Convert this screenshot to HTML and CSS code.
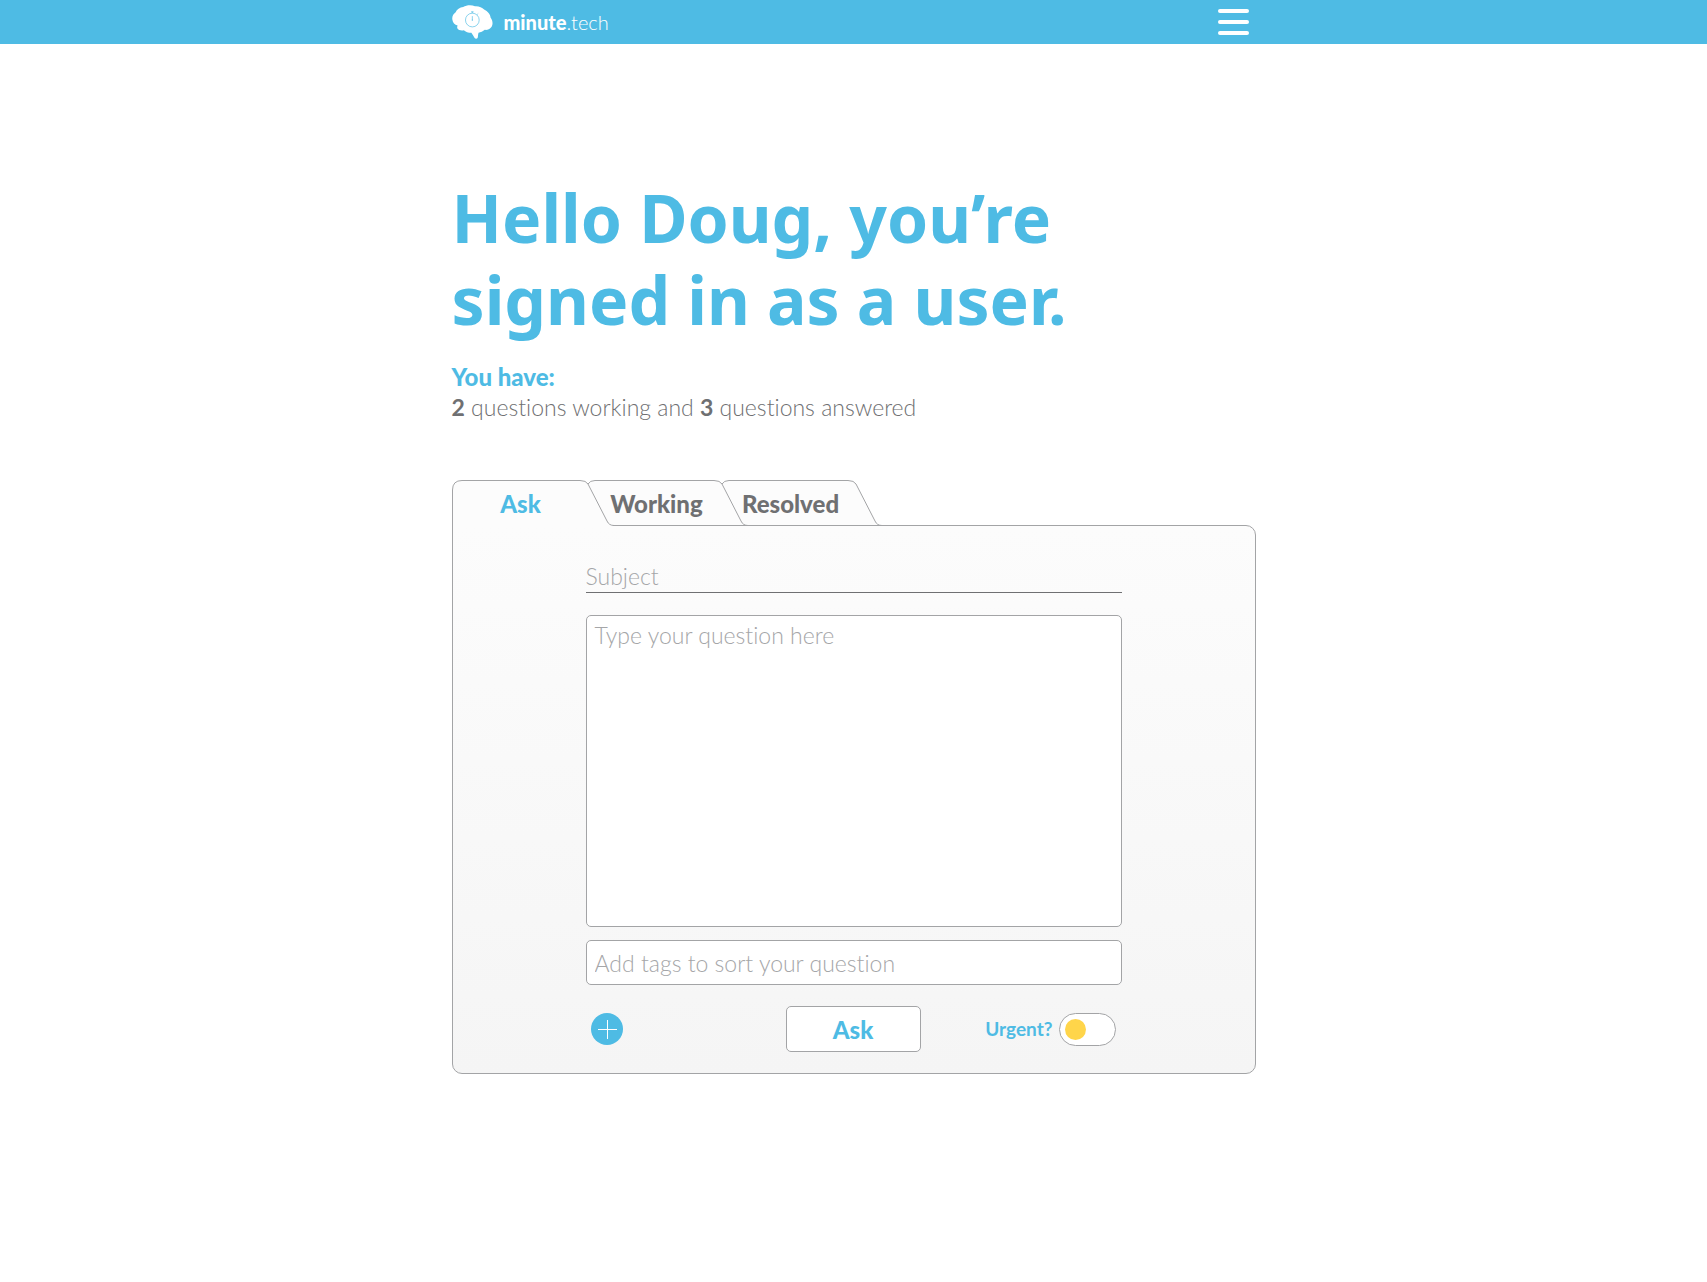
FILE: index.html
```html
<!DOCTYPE html>
<html lang="en">
<head>
<meta charset="utf-8">
<meta name="viewport" content="width=device-width, initial-scale=1">
<title>minute.tech</title>
<link rel="stylesheet" href="styles.css">
</head>
<body>
<header class="topbar">
  <div class="wrap topbar-inner">
    <a class="brand" href="#">
      <svg class="brand-mark" viewBox="32 14 125 104" aria-hidden="true">
        <path fill="#fff" d="M33 59C31 49 36 41 43 36C46 27 56 21 66 20C76 14 92 13 102 18C113 17 124 21 130 28C141 33 149 43 150 53C157 62 158 75 151 83C147 89 139 91 132 90C127 95 119 98 113 99C111 103 112 110 110 115C108 118 103 118 101 115C98 110 94 104 91 99C82 99 73 96 68 91C61 93 51 91 48 85C47 82 48 79 49 77C40 75 34 68 33 59Z"/>
        <circle cx="94" cy="60" r="21" fill="none" stroke="#4ebbe4" stroke-width="2"/>
        <path d="M94 39V34M90 35H98M94 48V60M109 43L112 40" fill="none" stroke="#4ebbe4" stroke-width="2"/>
        <circle cx="94" cy="60" r="2" fill="#4ebbe4"/>
      </svg>
      <span><b>minute</b>.tech</span>
    </a>
    <button class="menu" type="button" aria-label="Menu"><i></i><i></i><i></i></button>
  </div>
</header>
<main class="wrap">
  <h1 class="greeting">Hello Doug, you’re<br>signed in as a user.</h1>
  <section class="summary">
    <h2>You have:</h2>
    <p><b>2</b> questions working and <b>3</b> questions answered</p>
  </section>
  <div class="tabs" role="tablist">
    <button class="tab tab-active" type="button" role="tab" aria-selected="true">
      <svg viewBox="0 0 162 46" aria-hidden="true"><path class="fill" d="M1 46V10Q1 1 10 1H128Q134 1 136 4L155 41Q157 45 161 45V46Z"/><path class="line" d="M.5 46V10Q.5 .5 10 .5H128Q134 .5 136 4L155 41Q157 45.500 162 45.500"/></svg>
      <span>Ask</span>
    </button>
    <button class="tab" type="button" role="tab" aria-selected="false">
      <svg viewBox="0 0 162 46" aria-hidden="true"><path class="fill" d="M2 45V4Q4 1 9 1H128Q134 1 136 4L155 41Q157 45 161 45Z"/><path class="line" d="M2 4Q4 .5 9 .5H128Q134 .5 136 4L155 41Q157 45.500 162 45.500"/></svg>
      <span>Working</span>
    </button>
    <button class="tab" type="button" role="tab" aria-selected="false">
      <svg viewBox="0 0 162 46" aria-hidden="true"><path class="fill" d="M2 45V4Q4 1 9 1H128Q134 1 136 4L155 41Q157 45 161 45Z"/><path class="line" d="M2 4Q4 .5 9 .5H128Q134 .5 136 4L155 41Q157 45.500 162 45.500"/></svg>
      <span>Resolved</span>
    </button>
  </div>
  <section class="panel" role="tabpanel">
    <form class="ask-form">
      <input class="subject" type="text" placeholder="Subject" aria-label="Subject">
      <textarea class="box question" placeholder="Type your question here" aria-label="Question"></textarea>
      <input class="box tags" type="text" placeholder="Add tags to sort your question" aria-label="Tags">
      <div class="actions">
        <button class="add" type="button" aria-label="Add attachment">
          <svg viewBox="0 0 32 32" aria-hidden="true"><path d="M16.500 7V26M7 16.500H26" stroke="#fff" fill="none"/></svg>
        </button>
        <button class="box submit" type="submit">Ask</button>
        <div class="urgent">
          <label for="urgent">Urgent?</label>
          <input id="urgent" class="toggle" type="checkbox">
        </div>
      </div>
    </form>
  </section>
</main>
</body>
</html>
```
FILE: styles.css
```css
* { box-sizing: border-box; }
:root {
  --blue: #4ebbe4;
  --gray: #6f7072;
  --line: #a3a4a6;
}
body {
  margin: 0;
  background: #fff;
  color: var(--gray);
  font-family: Lato, "Open Sans", sans-serif;
  font-size: 23px;
  font-weight: 300;
  font-variant-ligatures: none;
}
button, input, textarea { font: inherit; color: inherit; margin: 0; font-variant-ligatures: none; }
button { padding: 0; border: 0; background: none; cursor: pointer; }
b { font-weight: 700; }

.wrap { width: 100%; max-width: 804px; margin: 0 auto; }

.topbar { background: var(--blue); }
.topbar-inner {
  display: flex;
  align-items: center;
  justify-content: space-between;
  height: 44px;
  padding-right: 7px;
}
.brand {
  display: flex;
  align-items: center;
  gap: 11px;
  color: #fff;
  font-size: 20px;
  line-height: 24px;
  text-decoration: none;
}
.brand b { font-weight: 900; }
.brand-mark { width: 41px; height: 34px; }
.menu { display: flex; flex-direction: column; gap: 7px; width: 31px; padding-bottom: 1px; }
.menu i { height: 4px; border-radius: 2px; background: #fff; }

.greeting {
  margin: 132px 0 21px;
  color: var(--blue);
  font-family: "Noto Sans", "Open Sans", sans-serif;
  font-size: 66px;
  font-weight: 700;
  line-height: 82px;
}
.summary { margin-bottom: 57px; line-height: 31px; }
.summary h2 { margin: 0; color: var(--blue); font-size: 24px; font-weight: 900; }
.summary p { margin: 0; }

.tabs { display: flex; margin-bottom: -1px; }
.tab {
  position: relative;
  z-index: 2;
  width: 134px;
  height: 46px;
  padding-left: 8px;
  font-size: 24px;
  font-weight: 900;
  line-height: 48px;
}
.tab:nth-child(1) { z-index: 4; }
.tab:nth-child(2) { z-index: 3; }
.tab-active { padding-left: 4px; color: var(--blue); }
.tab svg { position: absolute; left: 0; top: 0; width: 162px; height: 46px; }
.tab span { position: relative; }
.tab .fill { fill: #fcfcfc; }
.tab .line { fill: none; stroke: var(--line); }

.panel {
  padding: 32px 16px 21px;
  border: 1px solid var(--line);
  border-radius: 0 10px 10px 10px;
  background: linear-gradient(#fcfcfc, #f5f5f5);
}
.ask-form { max-width: 536px; margin: 0 auto; }
.ask-form input, .ask-form textarea { display: block; }
::placeholder { color: #a5a6a8; opacity: 1; }
.subject {
  width: 100%;
  height: 35px;
  padding: 2px 0 0;
  border: 0;
  border-bottom: 1px solid var(--gray);
  background: none;
}
.box { border: 1px solid var(--line); border-radius: 5px; background: #fff; }
.question {
  width: 100%;
  height: 312px;
  margin: 22px 0 13px;
  padding: 4px 8px;
  line-height: 30px;
  resize: none;
}
.tags { width: 100%; height: 45px; padding: 0 8px; }
.actions {
  display: grid;
  grid-template-columns: 1fr 135px 1fr;
  align-items: center;
  margin-top: 21px;
  padding: 0 6px 0 5px;
}
.add { width: 32px; height: 32px; border-radius: 50%; background: var(--blue); }
.add svg { display: block; width: 32px; height: 32px; }
.submit { height: 46px; color: var(--blue); font-size: 24px; font-weight: 900; }
.urgent {
  display: flex;
  align-items: center;
  justify-content: flex-end;
  gap: 6px;
  color: var(--blue);
  font-size: 19px;
  font-weight: 700;
}
.urgent label { line-height: 24px; }
.ask-form .toggle {
  appearance: none;
  width: 57px;
  height: 33px;
  padding: 5px;
  border: 1px solid var(--line);
  border-radius: 17px;
  background: #fff;
}
.toggle::before {
  content: "";
  display: block;
  width: 21px;
  height: 21px;
  border-radius: 50%;
  background: #ffd54a;
}
.toggle:checked::before { margin-left: auto; }
```
